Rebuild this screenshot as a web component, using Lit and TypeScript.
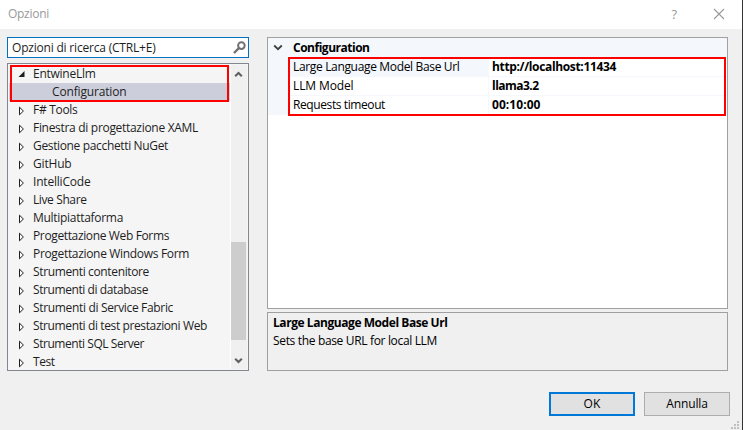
import { LitElement, html, css, svg } from "lit";
import { customElement, property } from "lit/decorators.js";

/** One line of text whose tracking is adjusted to a given advance width. */
@customElement("fit-label")
class FitLabel extends LitElement {
  @property({ type: String }) text = "";
  @property({ type: Number }) width = 0;

  static styles = css`
    :host { display: inline-block; white-space: pre; flex: none; }
    .t { display: inline-block; }
  `;

  private fit() {
    const el = this.renderRoot.querySelector(".t") as HTMLElement;
    if (!el || !this.width) return;
    el.style.letterSpacing = "0px";
    const natural = el.getBoundingClientRect().width;
    el.style.letterSpacing = `${(this.width - natural) / this.text.length}px`;
  }

  firstUpdated() {
    this.fit();
    document.fonts.ready.then(() => this.fit());
  }

  render() {
    return html`<span class="t">${this.text}</span>`;
  }
}

const nodes: [string, number][] = [
  ["F# Tools", 44.5],
  ["Finestra di progettazione XAML", 165],
  ["Gestione pacchetti NuGet", 135],
  ["GitHub", 38.5],
  ["IntelliCode", 57.5],
  ["Live Share", 53.5],
  ["Multipiattaforma", 90],
  ["Progettazione Web Forms", 136],
  ["Progettazione Windows Form", 156],
  ["Strumenti contenitore", 116],
  ["Strumenti di database", 115],
  ["Strumenti di Service Fabric", 140],
  ["Strumenti di test prestazioni Web", 174],
  ["Strumenti SQL Server", 111],
  ["Test", 21.5],
];

const rows: [string, number, string, number][] = [
  ["Large Language Model Base Url", 166.5, "http://localhost:11434", 124],
  ["LLM Model", 60.5, "llama3.2", 46.5],
  ["Requests timeout", 92, "00:10:00", 48.5],
];

const grip = [[6, 0], [3, 3], [6, 3], [0, 6], [3, 6], [6, 6]];

@customElement("app-root")
class AppRoot extends LitElement {
  static styles = css`
    :host {
      display: block;
      width: 743px;
      height: 430px;
      overflow: hidden;
      font: 12px/18px "Open Sans", "Noto Sans", sans-serif;
      color: #1e1e1e;
    }
    * { box-sizing: border-box; }
    svg { display: block; flex: none; }
    .window {
      position: relative;
      width: 743px;
      height: 430px;
      display: flex;
      flex-direction: column;
      background: #f0f0f0;
      border-right: 1px solid #333;
    }
    .title {
      height: 29px;
      flex: none;
      display: flex;
      align-items: center;
      background: #fff;
      color: #999;
      padding: 0 17px 2px 8px;
    }
    .title fit-label { padding-top: 1px; }
    .grow { flex: 1; }
    .help { font-size: 13px; margin-right: 36px; }
    .main { display: flex; gap: 18px; padding: 8px 13px 0 7px; height: 342px; }
    .left { width: 242px; display: flex; flex-direction: column; gap: 5px; }
    .search {
      height: 21px;
      display: flex;
      align-items: center;
      justify-content: space-between;
      background: #fff;
      border: 1px solid #0070c0;
      padding: 0 2px 0 4px;
    }
    .search fit-label { padding-top: 1px; }
    .tree {
      position: relative;
      height: 308px;
      display: flex;
      background: #f5f5f5;
      border: 1px solid #828790;
      padding: 1px;
      overflow: hidden;
    }
    .list { width: 221px; height: 306px; flex: none; }
    .node { height: 18px; display: flex; align-items: flex-start; padding-left: 9px; }
    .node svg { margin: 5px 5px 0 0; }
    .child { padding-left: 43px; background: #cccedb; }
    .bar {
      width: 17px;
      display: flex;
      flex-direction: column;
      align-items: center;
      background: #f0f0f0;
      border-left: 1px solid #fff;
      padding: 6px 1px 4px 0;
    }
    .thumb { width: 15px; height: 98px; margin: 164px 0 17px; background: #cdcdcd; }
    .mark { position: absolute; border: 2px solid #f00; pointer-events: none; }
    .mark-tree { left: 2px; top: 1px; width: 219px; height: 37px; }
    .mark-grid { left: 20px; top: 19px; width: 438px; height: 59px; }
    .right { flex: none; width: 461px; display: flex; flex-direction: column; gap: 3px; color: #000; }
    .grid {
      position: relative;
      height: 272px;
      background: #fff;
      border: 1px solid #a0a0a0;
    }
    .head {
      height: 20px;
      display: flex;
      align-items: center;
      background: #f4f7fc;
      padding: 0 0 1px 5px;
    }
    .head svg { margin-right: 10px; }
    .bold { font-weight: 700; }
    .row { height: 19px; display: flex; }
    .gutter { width: 21px; background: #f4f7fc; }
    .cell {
      width: 200px;
      padding-left: 4px;
      border-bottom: 1px solid #f4f7fc;
      border-right: 1px solid #f4f7fc;
    }
    .row:nth-child(2) .cell { background: #f4f7fc; }
    .value { flex: 1; padding-left: 3px; border-bottom: 1px solid #f4f7fc; font-weight: 700; }
    .desc { height: 59px; border: 1px solid #a0a0a0; padding: 1px 5px; display: flex; flex-direction: column; align-items: flex-start; }
    .buttons { display: flex; justify-content: flex-end; gap: 9px; padding: 21px 12px 0 0; color: #000; }
    .btn {
      width: 86px;
      height: 24px;
      display: flex;
      align-items: center;
      justify-content: center;
      background: #e1e1e1;
      border: 1px solid #adadad;
    }
    .primary { border: 2px solid #0078d7; }
    .grip { position: absolute; left: 731px; top: 421px; }
  `;

  render() {
    return html`
      <div class="window">
        <div class="title">
          <fit-label text="Opzioni" .width=${41}></fit-label>
          <span class="grow"></span>
          <span class="help">?</span>
          <svg width="12" height="12" viewBox="0 0 12 12">
            <path d="M1 1L11 11M11 1L1 11" stroke="#999" stroke-width="1.1" fill="none" />
          </svg>
        </div>
        <div class="main">
          <div class="left">
            <div class="search">
              <fit-label text="Opzioni di ricerca (CTRL+E)" .width=${143.5}></fit-label>
              <svg width="13" height="13" viewBox="0 0 13 13">
                <circle cx="8.4" cy="4.6" r="3.3" fill="none" stroke="#717171" stroke-width="2" />
                <path d="M6 7L1 12" stroke="#717171" stroke-width="2.4" />
              </svg>
            </div>
            <div class="tree">
              <div class="list">
                <div class="node">
                  <svg width="10" height="10" viewBox="0 0 10 10"><path d="M6.5 1V7H0.5Z" fill="#1e1e1e" /></svg>
                  <fit-label text="EntwineLlm" .width=${62.5}></fit-label>
                </div>
                <div class="node child"><fit-label text="Configuration" .width=${74.5}></fit-label></div>
                ${nodes.map(
                  ([t, w]) => html`<div class="node">
                    <svg width="10" height="10" viewBox="0 0 10 10">
                      <path d="M1.5 1.2V8.8L5.4 5Z" fill="#fff" stroke="#1e1e1e" />
                    </svg>
                    <fit-label .text=${t} .width=${w}></fit-label>
                  </div>`
                )}
              </div>
              <div class="bar">
                <svg width="9" height="7" viewBox="0 0 9 7"><path d="M1.2 5.2L4.5 1.9L7.8 5.2" fill="none" stroke="#606060" stroke-width="2.1" /></svg>
                <div class="thumb"></div>
                <svg width="9" height="7" viewBox="0 0 9 7"><path d="M1.2 1.8L4.5 5.1L7.8 1.8" fill="none" stroke="#606060" stroke-width="2.1" /></svg>
              </div>
              <div class="mark mark-tree"></div>
            </div>
          </div>
          <div class="right">
            <div class="grid">
              <div class="head">
                <svg width="10" height="7" viewBox="0 0 10 7"><path d="M1.2 1.5L5 5.2L8.8 1.5" fill="none" stroke="#404040" stroke-width="1.8" /></svg>
                <fit-label class="bold" text="Configuration" .width=${76.5}></fit-label>
              </div>
              ${rows.map(
                ([k, kw, v, vw]) => html`<div class="row">
                  <div class="gutter"></div>
                  <div class="cell"><fit-label .text=${k} .width=${kw}></fit-label></div>
                  <div class="value"><fit-label .text=${v} .width=${vw}></fit-label></div>
                </div>`
              )}
              <div class="mark mark-grid"></div>
            </div>
            <div class="desc">
              <fit-label class="bold" text="Large Language Model Base Url" .width=${174.5}></fit-label>
              <fit-label text="Sets the base URL for local LLM" .width=${164}></fit-label>
            </div>
          </div>
        </div>
        <div class="buttons">
          <div class="btn primary"><fit-label text="OK" .width=${17}></fit-label></div>
          <div class="btn"><fit-label text="Annulla" .width=${41.5}></fit-label></div>
        </div>
        <svg class="grip" width="8" height="8" viewBox="0 0 8 8">
          ${grip.map(([x, y]) => svg`<rect x=${x} y=${y} width="2" height="2" fill="#bfbfbf" />`)}
        </svg>
      </div>
    `;
  }
}
